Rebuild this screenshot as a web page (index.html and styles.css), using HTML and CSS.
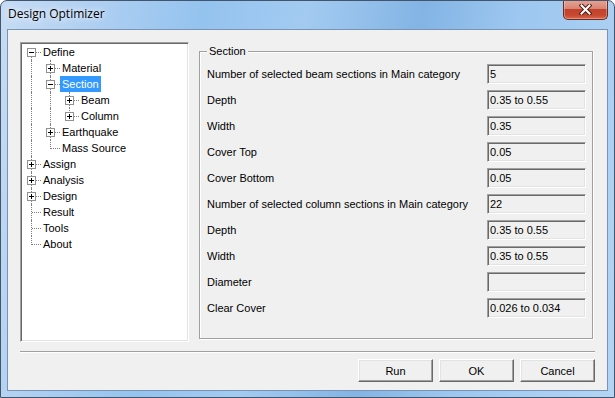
FILE: index.html
```html
<!DOCTYPE html>
<html lang="en">

<head>
    <meta charset="UTF-8">
    <title>Design Optimizer</title>
    <link rel="stylesheet" href="styles.css">
</head>

<body>
    <div class="window">
        <div class="titlebar">
            <span class="title">Design Optimizer</span>
            <button class="close-btn">
                <svg width="13" height="11" viewBox="0 0 13 11">
                    <path d="M2.5 1.5l8 8M10.5 1.5l-8 8" stroke="#4a1d16" stroke-width="4" stroke-linecap="square" />
                    <path d="M2.5 1.5l8 8M10.5 1.5l-8 8" stroke="#fff" stroke-width="2" stroke-linecap="square" />
                </svg>
            </button>
        </div>

        <div class="client">
            <div class="main">
                <div class="tree">
                    <div class="node"><span class="cell bottom branch"><i class="box"></i></span><span class="label">Define</span></div>
                    <div class="node"><span class="cell thru"></span><span class="cell thru branch"><i class="box plus"></i></span><span class="label">Material</span></div>
                    <div class="node"><span class="cell thru"></span><span class="cell thru branch"><i class="box"></i></span><span class="label selected">Section</span></div>
                    <div class="node"><span class="cell thru"></span><span class="cell thru"></span><span class="cell thru branch"><i class="box plus"></i></span><span class="label">Beam</span></div>
                    <div class="node"><span class="cell thru"></span><span class="cell thru"></span><span class="cell top branch"><i class="box plus"></i></span><span class="label">Column</span></div>
                    <div class="node"><span class="cell thru"></span><span class="cell thru branch"><i class="box plus"></i></span><span class="label">Earthquake</span></div>
                    <div class="node"><span class="cell thru"></span><span class="cell top branch"></span><span class="label">Mass Source</span></div>
                    <div class="node"><span class="cell thru branch"><i class="box plus"></i></span><span class="label">Assign</span></div>
                    <div class="node"><span class="cell thru branch"><i class="box plus"></i></span><span class="label">Analysis</span></div>
                    <div class="node"><span class="cell thru branch"><i class="box plus"></i></span><span class="label">Design</span></div>
                    <div class="node"><span class="cell thru branch"></span><span class="label">Result</span></div>
                    <div class="node"><span class="cell thru branch"></span><span class="label">Tools</span></div>
                    <div class="node"><span class="cell top branch"></span><span class="label">About</span></div>
                </div>

                <div class="group">
                    <span class="legend">Section</span>
                    <div class="fields">
                        <span class="field-label">Number of selected beam sections in Main category</span>
                        <div class="field">5</div>
                        <span class="field-label">Depth</span>
                        <div class="field">0.35 to 0.55</div>
                        <span class="field-label">Width</span>
                        <div class="field">0.35</div>
                        <span class="field-label">Cover Top</span>
                        <div class="field">0.05</div>
                        <span class="field-label">Cover Bottom</span>
                        <div class="field">0.05</div>
                        <span class="field-label">Number of selected column sections in Main category</span>
                        <div class="field">22</div>
                        <span class="field-label">Depth</span>
                        <div class="field">0.35 to 0.55</div>
                        <span class="field-label">Width</span>
                        <div class="field">0.35 to 0.55</div>
                        <span class="field-label">Diameter</span>
                        <div class="field"></div>
                        <span class="field-label">Clear Cover</span>
                        <div class="field">0.026 to 0.034</div>
                    </div>
                </div>
            </div>

            <div class="separator"></div>

            <div class="buttons">
                <button class="btn">Run</button>
                <button class="btn">OK</button>
                <button class="btn">Cancel</button>
            </div>
        </div>
    </div>
</body>

</html>
```

FILE: styles.css
```css
* {
    margin: 0;
    padding: 0;
    box-sizing: border-box;
}

body {
    background-color: #fff;
    font-family: "Liberation Sans", Arial, sans-serif;
    font-size: 11px;
    color: #000;
}

.window {
    width: 615px;
    height: 398px;
    border: 1px solid #44546a;
    border-radius: 7px 7px 0 0;
    background: linear-gradient(100deg, #c6dcf4 0%, #b2d1f2 12%, #94c3ef 30%, #a3cbf1 45%, #83b4e4 62%, #9dc7f0 76%, #b3d5f5 100%);
    display: flex;
    flex-direction: column;
    overflow: hidden;
}

.titlebar {
    height: 28px;
    display: flex;
    align-items: flex-start;
}

.title {
    font-family: "Open Sans", sans-serif;
    font-size: 12px;
    line-height: 16px;
    padding: 5px 0 0 7px;
    color: #000;
    text-shadow: 0 0 6px rgba(255, 255, 255, 0.9), 0 0 10px rgba(255, 255, 255, 0.7);
}

.close-btn {
    margin-left: auto;
    margin-right: 6px;
    margin-top: -1px;
    width: 45px;
    height: 20px;
    border: 1px solid #6b2b22;
    border-top: none;
    border-radius: 0 0 5px 5px;
    background: linear-gradient(#e6a596 0%, #d88472 45%, #c2422c 50%, #c7482f 80%, #d9684c 100%);
    box-shadow: inset 0 0 0 1px rgba(255, 255, 255, 0.3);
    display: flex;
    align-items: center;
    justify-content: center;
}

.client {
    flex: 1;
    margin: 0 6px 6px;
    border: 1px solid #7a93b2;
    background-color: #f0f0f0;
    padding: 12px 0 0 12px;
}

.main {
    display: flex;
    align-items: flex-start;
}

/* tree view */
.tree {
    width: 169px;
    height: 300px;
    flex: none;
    background-color: #fff;
    border: 1px solid;
    border-color: #a0a0a0 #fff #fff #a0a0a0;
    box-shadow: inset 1px 1px 0 #696969, inset -1px -1px 0 #e3e3e3;
    padding: 1px 0 0 1px;
}

.node {
    display: flex;
    height: 16px;
    line-height: 16px;
}

.cell {
    position: relative;
    width: 19px;
    height: 16px;
    flex: none;
}

.cell.thru::before,
.cell.top::before,
.cell.bottom::before {
    content: "";
    position: absolute;
    left: 9px;
    border-left: 1px dotted #808080;
}

.cell.thru::before {
    top: 0;
    bottom: 0;
}

.cell.top::before {
    top: 0;
    height: 9px;
}

.cell.bottom::before {
    top: 8px;
    bottom: 0;
}

.cell.branch::after {
    content: "";
    position: absolute;
    left: 10px;
    right: 0;
    top: 8px;
    border-top: 1px dotted #808080;
}

.box {
    position: absolute;
    left: 5px;
    top: 4px;
    width: 9px;
    height: 9px;
    border: 1px solid #919191;
    background-color: #fff;
    z-index: 1;
}

.box::before {
    content: "";
    position: absolute;
    left: 1px;
    top: 3px;
    width: 5px;
    height: 1px;
    background-color: #000;
}

.box.plus::after {
    content: "";
    position: absolute;
    left: 3px;
    top: 1px;
    width: 1px;
    height: 5px;
    background-color: #000;
}

.label {
    padding: 0 2px;
    white-space: nowrap;
}

.label.selected {
    background-color: #3399ff;
    color: #fff;
}

/* section group */
.group {
    position: relative;
    width: 394px;
    height: 288px;
    margin: 9px 0 0 10px;
    border: 1px solid #a0a0a0;
    box-shadow: 1px 1px 0 #fff, inset 1px 1px 0 #fff;
    padding: 12px 6px 0 7px;
}

.legend {
    position: absolute;
    top: -7px;
    left: 7px;
    padding: 0 2px;
    line-height: 13px;
    background-color: #f0f0f0;
}

.fields {
    display: grid;
    grid-template-columns: 1fr 99px;
    grid-auto-rows: 20px;
    row-gap: 6px;
    align-items: center;
}

.field-label {
    white-space: nowrap;
}

.field {
    height: 20px;
    border: 1px solid;
    border-color: #a0a0a0 #fff #fff #a0a0a0;
    box-shadow: inset 1px 1px 0 #696969, inset -1px -1px 0 #e3e3e3;
    padding-left: 2px;
    line-height: 18px;
    background-color: #f0f0f0;
    white-space: nowrap;
}

.separator {
    width: 575px;
    height: 2px;
    margin-top: 9px;
    border-top: 1px solid #a0a0a0;
    border-bottom: 1px solid #fff;
}

.buttons {
    width: 575px;
    margin-top: 6px;
    display: flex;
    justify-content: flex-end;
    gap: 6px;
}

.btn {
    width: 75px;
    height: 23px;
    font-family: "Liberation Sans", Arial, sans-serif;
    font-size: 11px;
    color: #000;
    background-color: #f0f0f0;
    border: 1px solid;
    border-color: #fff #696969 #696969 #fff;
    box-shadow: inset -1px -1px 0 #a0a0a0, inset 1px 1px 0 #e3e3e3;
}
```
